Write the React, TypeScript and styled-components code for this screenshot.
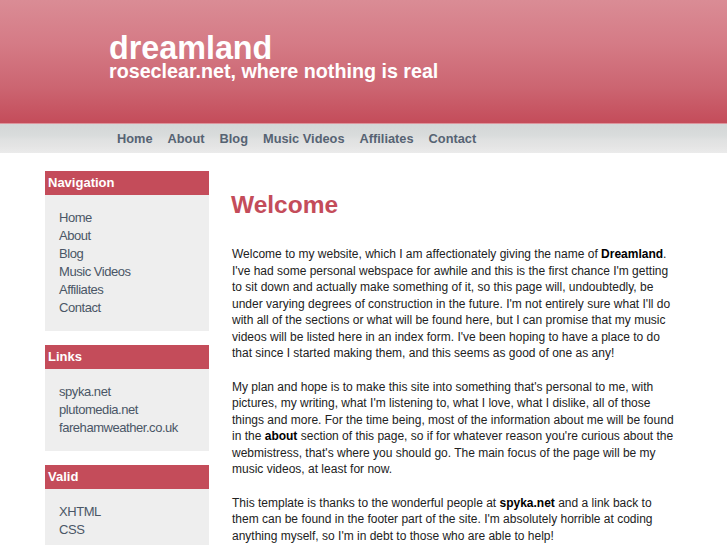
import styled, { createGlobalStyle } from 'styled-components';

const GlobalStyle = createGlobalStyle`
    html, body {
        margin: 0;
        padding: 0;
        background: #ffffff;
        font-family: "Liberation Sans", Arial, sans-serif;
    }
`;

const Header = styled.header`
    height: 124px;
    background: linear-gradient(to bottom, #da8c95 0%, #d57b86 35%, #cc6672 70%, #c44c5a 100%);
    border-bottom: 1px solid #dc959d;
    box-sizing: border-box;
    padding: 34px 0 0 109px;
    color: #ffffff;
`;

const Title = styled.h1`
    margin: 0;
    font-size: 32.3px;
    font-weight: 700;
    line-height: 29px;
`;

const Tagline = styled.p`
    margin: 0;
    font-size: 19.7px;
    font-weight: 700;
    line-height: 17px;
`;

const TopNav = styled.nav`
    height: 29px;
    background: linear-gradient(to bottom, #d4d7d7 0%, #d9dcdc 40%, #e0e1e1 55%, #e4e4e4 75%, #ebebeb 100%);
    display: flex;
    align-items: center;
    gap: 15px;
    padding-left: 117px;
`;

const TopLink = styled.a`
    color: #566373;
    font-size: 12.8px;
    font-weight: 700;
    text-decoration: none;
`;

const Container = styled.div`
    width: 637px;
    margin: 0 auto;
    padding-top: 18px;
    display: flex;
    gap: 22px;
`;

const Sidebar = styled.aside`
    width: 164px;
    flex-shrink: 0;
    display: flex;
    flex-direction: column;
    gap: 14px;
`;

const BoxTitle = styled.h3`
    margin: 0;
    height: 24px;
    line-height: 24px;
    padding-left: 3px;
    background: #c44c5a;
    color: #ffffff;
    font-size: 13px;
    font-weight: 700;
`;

const BoxList = styled.ul`
    margin: 0;
    list-style: none;
    background: #eeeeee;
    padding: 14px 0 14px 14px;
    li {
        line-height: 18px;
        font-size: 13px;
        letter-spacing: -0.45px;
        color: #4a5666;
    }
`;

const Content = styled.main`
    flex: 1;
    min-width: 0;
    color: #222222;
    font-size: 12px;
    line-height: 16.5px;
    b {
        color: #000000;
    }
    p {
        margin: 0 0 17px 1px;
        white-space: nowrap;
    }
`;

const Heading = styled.h2`
    margin: 20px 0 27px;
    font-size: 24.5px;
    line-height: 28px;
    font-weight: 700;
    color: #c44c5a;
`;

const boxes = [
    { title: 'Navigation', items: ['Home', 'About', 'Blog', 'Music Videos', 'Affiliates', 'Contact'] },
    { title: 'Links', items: ['spyka.net', 'plutomedia.net', 'farehamweather.co.uk'] },
    { title: 'Valid', items: ['XHTML', 'CSS'] },
];

const navItems = ['Home', 'About', 'Blog', 'Music Videos', 'Affiliates', 'Contact'];

const App = () => {
    return (
        <>
            <GlobalStyle />
            <Header>
                <Title>dreamland</Title>
                <Tagline>roseclear.net, where nothing is real</Tagline>
            </Header>
            <TopNav>
                {navItems.map((item) => (
                    <TopLink key={item} href="#">{item}</TopLink>
                ))}
            </TopNav>
            <Container>
                <Sidebar>
                    {boxes.map((box) => (
                        <div key={box.title}>
                            <BoxTitle>{box.title}</BoxTitle>
                            <BoxList>
                                {box.items.map((item) => (
                                    <li key={item}>{item}</li>
                                ))}
                            </BoxList>
                        </div>
                    ))}
                </Sidebar>
                <Content>
                    <Heading>Welcome</Heading>
                    <p>
                        Welcome to my website, which I am affectionately giving the name of <b>Dreamland</b>.<br />
                        I've had some personal webspace for awhile and this is the first chance I'm getting<br />
                        to sit down and actually make something of it, so this page will, undoubtedly, be<br />
                        under varying degrees of construction in the future. I'm not entirely sure what I'll do<br />
                        with all of the sections or what will be found here, but I can promise that my music<br />
                        videos will be listed here in an index form. I've been hoping to have a place to do<br />
                        that since I started making them, and this seems as good of one as any!
                    </p>
                    <p>
                        My plan and hope is to make this site into something that's personal to me, with<br />
                        pictures, my writing, what I'm listening to, what I love, what I dislike, all of those<br />
                        things and more. For the time being, most of the information about me will be found<br />
                        in the <b>about</b> section of this page, so if for whatever reason you're curious about the<br />
                        webmistress, that's where you should go. The main focus of the page will be my<br />
                        music videos, at least for now.
                    </p>
                    <p>
                        This template is thanks to the wonderful people at <b>spyka.net</b> and a link back to<br />
                        them can be found in the footer part of the site. I'm absolutely horrible at coding<br />
                        anything myself, so I'm in debt to those who are able to help!
                    </p>
                </Content>
            </Container>
        </>
    );
};

export default App;
